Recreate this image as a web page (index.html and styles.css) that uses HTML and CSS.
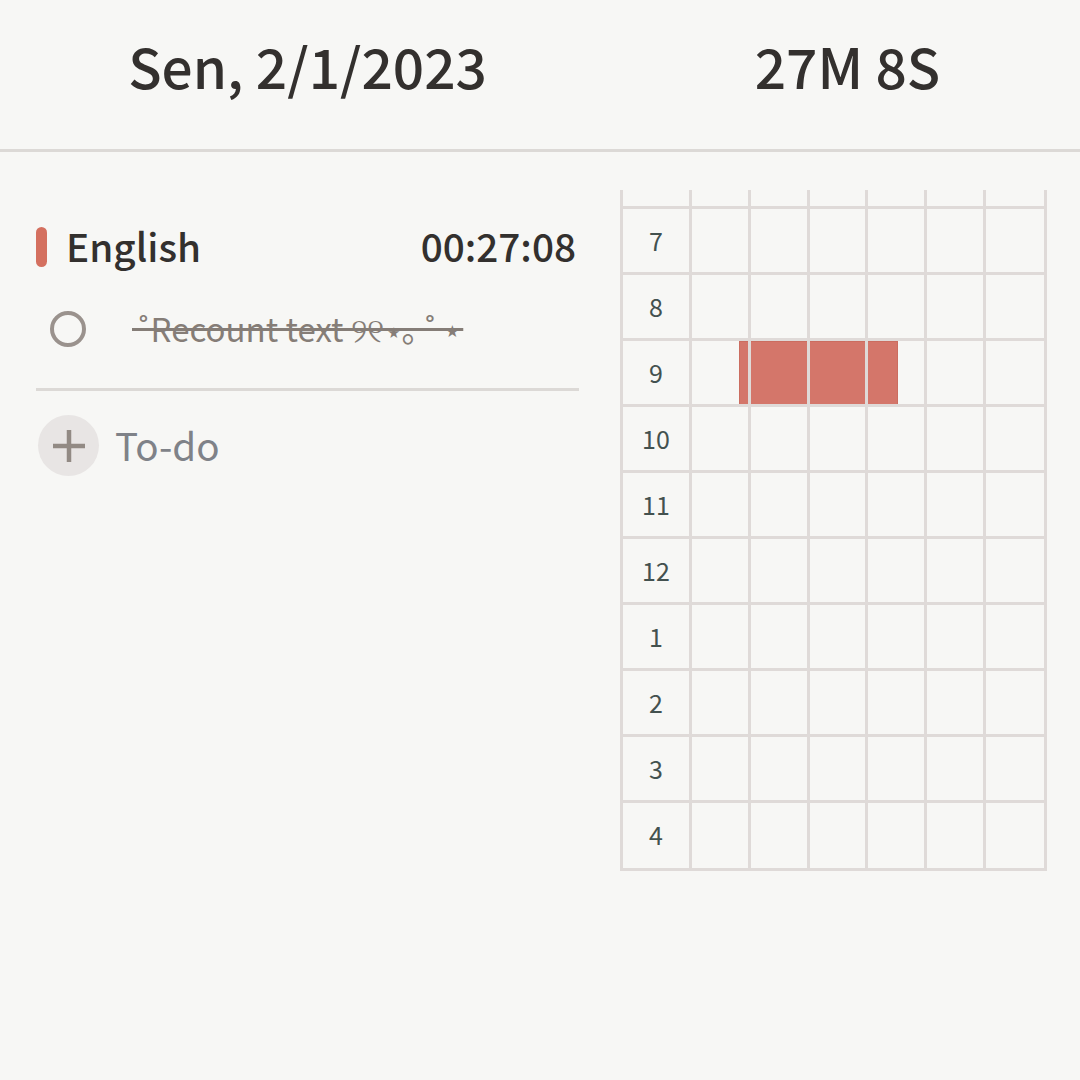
FILE: index.html
```html
<!DOCTYPE html>
<html lang="id">
<head>
<meta charset="utf-8">
<title>Study log</title>
<link rel="stylesheet" href="styles.css">
</head>
<body>
<header class="top">
  <div class="date">Sen, 2/1/2023</div>
  <div class="total">27M 8S</div>
</header>
<main class="main">
  <section class="tasks">
    <div class="subject">
      <span class="marker"></span>
      <span class="name">English</span>
      <span class="time">00:27:08</span>
    </div>
    <div class="todo">
      <span class="check"></span>
      <span class="todo-text">&#8201;˚&#8202;Recount text ୨୧&#8202;⋆｡&#8201;˚ ⋆</span>
    </div>
    <div class="add">
      <span class="add-btn">
        <svg width="34" height="34" viewBox="0 0 34 34"><path d="M17 1v32M1 17h32" stroke="#928a84" stroke-width="4.5" fill="none"/></svg>
      </span>
      <span class="add-label">To-do</span>
    </div>
  </section>
  <section class="planner">
    <div class="grid">
      <div class="event"></div>
      <div class="cell head"></div><div class="cell"></div><div class="cell"></div><div class="cell"></div><div class="cell"></div><div class="cell"></div><div class="cell"></div>
      <div class="cell hour">7</div><div class="cell"></div><div class="cell"></div><div class="cell"></div><div class="cell"></div><div class="cell"></div><div class="cell"></div>
      <div class="cell hour">8</div><div class="cell"></div><div class="cell"></div><div class="cell"></div><div class="cell"></div><div class="cell"></div><div class="cell"></div>
      <div class="cell hour">9</div><div class="cell"></div><div class="cell"></div><div class="cell"></div><div class="cell"></div><div class="cell"></div><div class="cell"></div>
      <div class="cell hour">10</div><div class="cell"></div><div class="cell"></div><div class="cell"></div><div class="cell"></div><div class="cell"></div><div class="cell"></div>
      <div class="cell hour">11</div><div class="cell"></div><div class="cell"></div><div class="cell"></div><div class="cell"></div><div class="cell"></div><div class="cell"></div>
      <div class="cell hour">12</div><div class="cell"></div><div class="cell"></div><div class="cell"></div><div class="cell"></div><div class="cell"></div><div class="cell"></div>
      <div class="cell hour">1</div><div class="cell"></div><div class="cell"></div><div class="cell"></div><div class="cell"></div><div class="cell"></div><div class="cell"></div>
      <div class="cell hour">2</div><div class="cell"></div><div class="cell"></div><div class="cell"></div><div class="cell"></div><div class="cell"></div><div class="cell"></div>
      <div class="cell hour">3</div><div class="cell"></div><div class="cell"></div><div class="cell"></div><div class="cell"></div><div class="cell"></div><div class="cell"></div>
      <div class="cell hour last">4</div><div class="cell"></div><div class="cell"></div><div class="cell"></div><div class="cell"></div><div class="cell"></div><div class="cell"></div>
    </div>
  </section>
</main>
</body>
</html>
```
FILE: styles.css
```css
* { box-sizing: border-box; }
html, body { margin: 0; height: 100%; }
body {
  background: #f7f7f5;
  font-family: "Noto Sans CJK KR", "Noto Sans", sans-serif;
  color: #33302e;
  overflow: hidden;
}
.top {
  display: grid;
  grid-template-columns: 615px 1fr;
  height: 152px;
  border-bottom: 3px solid #dcd9d6;
  align-items: center;
  text-align: center;
  font-size: 55px;
  font-weight: 500;
  padding-bottom: 19px;
}
.main { display: flex; padding: 38px 33px 0 36px; }
.tasks { width: 543px; margin-right: 41px; }
.subject { display: flex; align-items: center; height: 44px; margin-top: 35px; }
.marker { width: 11px; height: 40px; border-radius: 6px; background: #d4705f; margin-right: 19px; }
.name { font-size: 38.7px; font-weight: 500; flex: 1; padding-bottom: 4px; }
.time { font-size: 38.7px; font-weight: 500; margin-right: 3px; padding-bottom: 4px; }
.todo { display: flex; align-items: center; height: 122px; border-bottom: 3px solid #dcd9d6; padding-left: 14px; }
.check { width: 36px; height: 36px; border: 4px solid #9a928d; border-radius: 50%; margin-right: 46px; }
.todo-text { font-size: 33px; color: #857d77; text-decoration: line-through; padding-bottom: 2px; }
.add { display: flex; align-items: center; padding: 24px 0 0 2px; }
.add-btn { width: 61px; height: 61px; border-radius: 50%; background: #e8e5e4; display: flex; align-items: center; justify-content: center; margin-right: 16px; }
.add-label { font-size: 38.6px; color: #7f8288; padding-bottom: 4px; }
.planner { flex: none; }
.grid {
  position: relative;
  display: grid;
  grid-template-columns: 69px repeat(5, 58.8px) 61px;
  grid-template-rows: 19px repeat(9, 66px) 68px;
  border-left: 3px solid #dfdad8;
  width: 427px;
}
.cell { position: relative; z-index: 1; border-right: 3px solid #dfdad8; border-bottom: 3px solid #dfdad8; }
.hour { display: flex; align-items: center; justify-content: center; font-size: 25px; color: #43514f; padding-bottom: 2px; }
.hour.last { padding-bottom: 4px; }
.event { position: absolute; z-index: 0; left: 116px; top: 151px; width: 159px; height: 65px; background: #d4766a; border: 1px solid #cb6d60; }
```
